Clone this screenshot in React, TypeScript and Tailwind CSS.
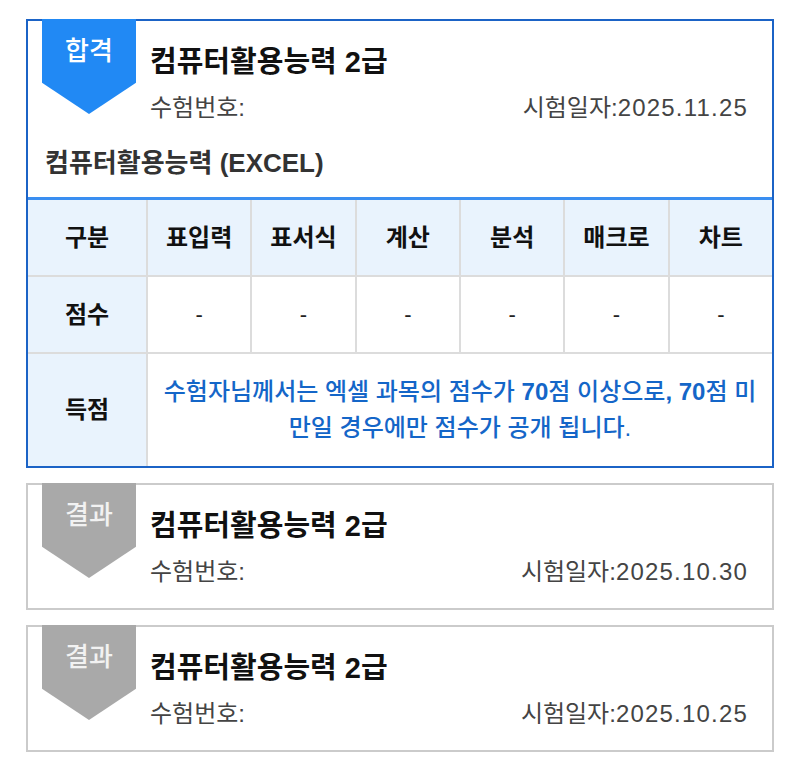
import React from "react";

const font = "font-['Liberation_Sans','Noto_Sans_CJK_KR',sans-serif]";

function Badge({ label, color, text }: { label: string; color: string; text: string }) {
  return (
    <div
      className={`absolute left-[14px] top-[-2px] w-[94px] h-[95px] ${color} [clip-path:polygon(0_0,100%_0,100%_67%,50%_100%,0_67%)] flex justify-center`}
    >
      <span className={`mt-[15px] text-[26px] leading-[34px] font-medium ${text}`}>{label}</span>
    </div>
  );
}

function Header({ date }: { date: string }) {
  return (
    <div className="pl-[122px] pr-[24px] pt-[22px]">
      <div className="text-[29px] leading-[38px] font-bold text-[#111]">컴퓨터활용능력 2급</div>
      <div className="mt-[12px] flex justify-between text-[24px] leading-[30px] text-[#444]">
        <span>수험번호:</span>
        <span>
          시험일자:<span className="tracking-[1.2px]">{date}</span>
        </span>
      </div>
    </div>
  );
}

function Cell({ children, head, className = "" }: { children: React.ReactNode; head?: boolean; className?: string }) {
  return (
    <div
      className={`flex items-center justify-center ${head ? "bg-[#e9f3fd]" : "bg-white"} ${className}`}
    >
      {children}
    </div>
  );
}

export default function App() {
  const cols = ["표입력", "표서식", "계산", "분석", "매크로", "차트"];
  return (
    <div className={`${font} bg-white min-h-[765px] px-[26px] pt-[19px] flex flex-col gap-[15px]`}>
      {/* Card 1 */}
      <div className="relative border-2 border-[#1b63c6]">
        <Badge label="합격" color="bg-[#2189f4]" text="text-white" />
        <Header date="2025.11.25" />
        <div className="pl-[17px] pt-[23px] pb-[17px] text-[26px] leading-[34px] font-bold text-[#333]">
          컴퓨터활용능력 (EXCEL)
        </div>
        <div className="border-t-[3px] border-[#3a8ef1] grid grid-cols-[118px_repeat(6,1fr)] gap-[2px] bg-[#dcdcdc]">
          <Cell head className="h-[75px] text-[24px] font-bold text-[#111]">구분</Cell>
          {cols.map((c) => (
            <Cell key={c} head className="h-[75px] text-[24px] font-bold text-[#111]">
              {c}
            </Cell>
          ))}
          <Cell head className="h-[75px] text-[24px] font-bold text-[#111]">점수</Cell>
          {cols.map((c) => (
            <Cell key={c + "v"} className="h-[75px] text-[22px] text-[#222]">
              -
            </Cell>
          ))}
          <Cell head className="h-[112px] text-[24px] font-bold text-[#111]">득점</Cell>
          <Cell className="col-span-6 h-[112px] text-center text-[24px] leading-[36px] font-medium text-[#1466c8]">
            <span className="whitespace-nowrap">
              수험자님께서는 엑셀 과목의 점수가 <b>70</b>점 이상으로<b>,</b> <b>70</b>점 미
              <br />
              만일 경우에만 점수가 공개 됩니다.
            </span>
          </Cell>
        </div>
      </div>

      {/* Card 2 */}
      <div className="relative border-2 border-[#cbcbcb] h-[127px]">
        <Badge label="결과" color="bg-[#a9a9a9]" text="text-[#f2f2f2]" />
        <Header date="2025.10.30" />
      </div>

      {/* Card 3 */}
      <div className="relative border-2 border-[#cbcbcb] h-[127px]">
        <Badge label="결과" color="bg-[#a9a9a9]" text="text-[#f2f2f2]" />
        <Header date="2025.10.25" />
      </div>
    </div>
  );
}
